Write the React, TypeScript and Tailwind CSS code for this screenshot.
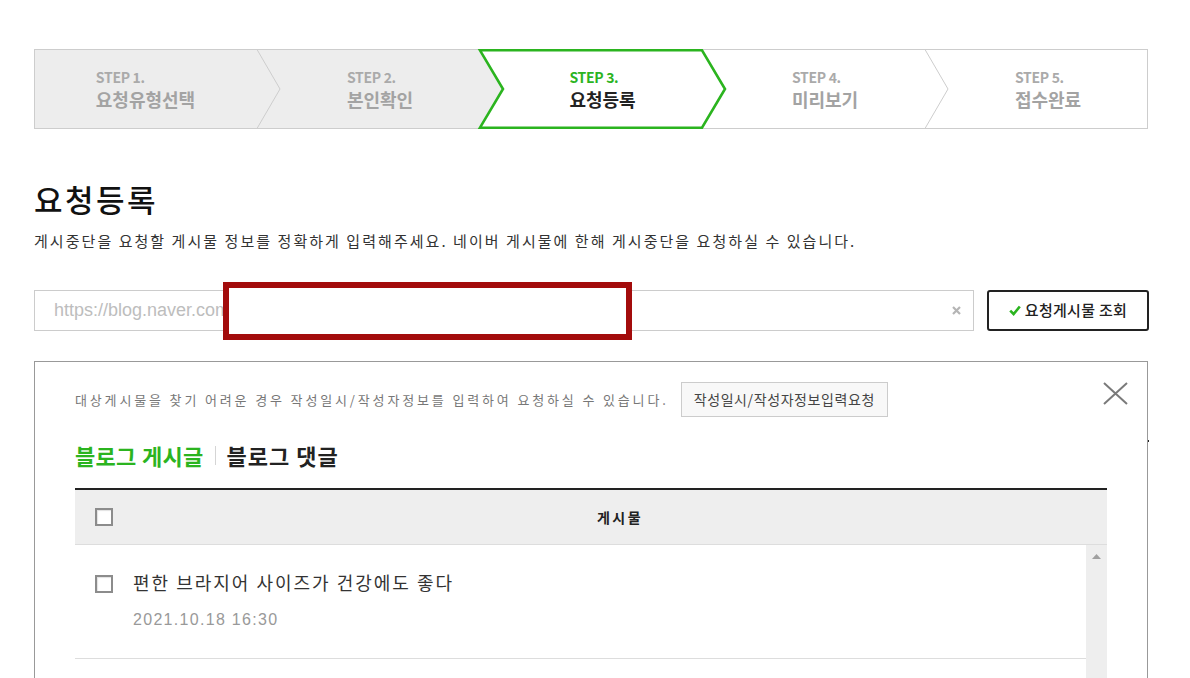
import React from "react";

const steps = [
  { no: "STEP 1.", label: "요청유형선택" },
  { no: "STEP 2.", label: "본인확인" },
  { no: "STEP 3.", label: "요청등록", active: true },
  { no: "STEP 4.", label: "미리보기" },
  { no: "STEP 5.", label: "접수완료" },
];

const posts = [{ title: "편한 브라지어 사이즈가 건강에도 좋다", date: "2021.10.18 16:30" }];

function StepBar() {
  return (
    <div className="relative h-[80px] w-[1114px]">
      {/* chevron shapes */}
      <svg className="absolute inset-0" width="1114" height="80" viewBox="0 0 1114 80">
        <path d="M0.5 0.5H446L469 40L446 79.5H0.5Z" fill="#ededed" />
        <rect x="0.5" y="0.5" width="1113" height="79" fill="none" stroke="#cdcdcd" />
        <path d="M223 0.5L246 40L223 79.5" fill="none" stroke="#cdcdcd" />
        <path d="M891 0.5L914 40L891 79.5" fill="none" stroke="#cdcdcd" />
        <path
          d="M446 1.3H668L691 40L668 78.7H446L469 40Z"
          fill="#fff"
          stroke="#2bb41f"
          strokeWidth="2.6"
          strokeLinejoin="miter"
        />
      </svg>
      <div className="relative flex h-full">
        {steps.map((s, i) => (
          <div
            key={s.no}
            className={`flex h-full items-center justify-center ${i === 2 ? "w-[222px]" : "w-[223px]"} ${
              i > 0 ? "pl-[23px]" : ""
            }`}
          >
            <div className="flex flex-col items-start">
              <span
                className={`text-[14px] font-bold leading-[18px] tracking-[-0.3px] ${
                  s.active ? "text-[#2bb41f]" : "text-[#aaaaaa]"
                }`}
              >
                {s.no}
              </span>
              <span
                className={`mt-[2px] text-[18px] font-bold leading-[22px] ${
                  s.active ? "text-[#222]" : "text-[#a3a3a3]"
                }`}
              >
                {s.label}
              </span>
            </div>
          </div>
        ))}
      </div>
    </div>
  );
}

function Checkbox() {
  return <div className="h-[18px] w-[18px] border-2 border-[#8c8c8c] bg-white shadow-[inset_1px_1px_1px_#e2e2e2]" />;
}

export default function App() {
  return (
    <div className="min-h-screen bg-white font-['Noto_Sans_CJK_KR',sans-serif] text-[#222]">
      <div className="ml-[34px] w-[1115px] pt-[49px]">
        <StepBar />

        {/* Title */}
        <h1 className="mt-[52px] text-[31px] font-medium leading-[36px] tracking-[2.5px] text-[#111]">요청등록</h1>
        <p className="mt-[14px] text-[15px] leading-[20px] tracking-[2.05px] text-[#333]">
          게시중단을 요청할 게시물 정보를 정확하게 입력해주세요. 네이버 게시물에 한해 게시중단을 요청하실 수 있습니다.
        </p>

        {/* URL input */}
        <div className="mt-[39px] flex items-center gap-[13px]">
          <div className="relative flex h-[41px] flex-1 items-center border border-[#cccccc] bg-white">
            <input
              readOnly
              placeholder="https://blog.naver.com/"
              className="h-full flex-1 bg-transparent pl-[19px] font-['Liberation_Sans',sans-serif] text-[18px] text-[#333] outline-none placeholder:text-[#bdbdbd]"
            />
            <svg className="mr-[12px]" width="9" height="9" viewBox="0 0 9 9">
              <path d="M1 1L8 8M8 1L1 8" stroke="#b5b5b5" strokeWidth="2.2" />
            </svg>
            {/* redaction box */}
            <div className="absolute left-[188px] top-[-9px] h-[58px] w-[409px] border-[6px] border-[#a30c0c] bg-white" />
          </div>
          <button className="flex h-[41px] w-[162px] items-center justify-center gap-[4px] rounded-[3px] border-2 border-[#222] bg-white text-[15px] font-medium tracking-[0.3px] text-[#222]">
            <svg width="12" height="11" viewBox="0 0 12 11">
              <path d="M1.2 5.6L4.6 9L10.8 1.5" fill="none" stroke="#2bb41f" strokeWidth="2.6" />
            </svg>
            요청게시물 조회
          </button>
        </div>

        {/* Result panel */}
        <div className="relative mt-[30px] h-[330px] w-[1114px] border border-b-0 border-[#999] px-[40px] pt-[20px]">
          <span className="absolute right-[-2px] top-[78px] h-[2px] w-[1px] bg-[#222]" />
          <svg className="absolute right-[19px] top-[20px]" width="25" height="23" viewBox="0 0 25 23">
            <path d="M1 1L24 22M24 1L1 22" stroke="#7a7a7a" strokeWidth="2" />
          </svg>

          <div className="flex items-center gap-[12px]">
            <p className="text-[13px] tracking-[2.85px] text-[#777]">
              대상게시물을 찾기 어려운 경우 작성일시/작성자정보를 입력하여 요청하실 수 있습니다.
            </p>
            <button className="h-[35px] border border-[#cccccc] bg-[#f8f8f8] px-[12px] text-[14px] tracking-[0.6px] text-[#444]">
              작성일시/작성자정보입력요청
            </button>
          </div>

          {/* Tabs */}
          <div className="mt-[24px] flex h-[28px] items-center text-[22px] font-bold leading-[28px] tracking-[0.3px]">
            <span className="text-[#2bb41f]">블로그 게시글</span>
            <span className="mx-[11px] h-[19px] w-px bg-[#d5d5d5]" />
            <span className="tracking-[1px] text-[#222]">블로그 댓글</span>
          </div>

          {/* Table */}
          <div className="mt-[19px] w-[1032px] border-t-2 border-[#222]">
            <div className="flex h-[55px] items-center border-b border-[#dddddd] bg-[#eeeeee]">
              <div className="w-[58px] pl-[20px]">
                <Checkbox />
              </div>
              <div className="flex-1 text-center text-[14px] font-semibold tracking-[2.5px] text-[#222]">게시물</div>
            </div>
            <div className="flex h-[140px] overflow-hidden">
              <div className="flex-1">
                {posts.map((p) => (
                  <div key={p.title} className="flex border-b border-[#dddddd] pb-[27px] pt-[24px]">
                    <div className="w-[58px] pl-[20px] pt-[6px]">
                      <Checkbox />
                    </div>
                    <div className="flex flex-col">
                      <span className="text-[18px] leading-[26px] tracking-[2px] text-[#333]">{p.title}</span>
                      <span className="mt-[14px] font-['Liberation_Sans',sans-serif] text-[16px] leading-[22px] tracking-[1.3px] text-[#999]">
                        {p.date}
                      </span>
                    </div>
                  </div>
                ))}
              </div>
              <div className="flex w-[21px] justify-center bg-[#eeeeee] pt-[9px]">
                <svg width="9" height="5" viewBox="0 0 9 5">
                  <path d="M4.5 0L9 5H0Z" fill="#a0a0a0" />
                </svg>
              </div>
            </div>
          </div>
        </div>
      </div>
    </div>
  );
}
